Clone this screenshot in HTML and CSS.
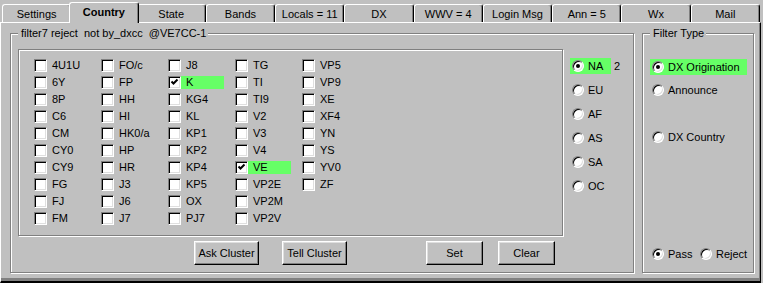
FILE: index.html
```html
<!DOCTYPE html>
<html lang="en">
<head>
  <meta charset="UTF-8">
  <title>Country Filter</title>
  <link rel="stylesheet" href="styles.css">
</head>
<body>

  <div id="onglets">
    <div class="onglet">Settings</div>
    <div class="onglet actif">Country</div>
    <div class="onglet">State</div>
    <div class="onglet">Bands</div>
    <div class="onglet">Locals = 11</div>
    <div class="onglet">DX</div>
    <div class="onglet">WWV = 4</div>
    <div class="onglet">Login Msg</div>
    <div class="onglet">Ann = 5</div>
    <div class="onglet">Wx</div>
    <div class="onglet">Mail</div>
  </div>

  <div id="panneau">
    <div class="groupe" id="groupeFiltre">
      <div class="legende">filter7 reject  not by_dxcc  @VE7CC-1</div>
      <div id="corpsFiltre">
        <div id="listePays"></div>
        <div id="continents">
          <div class="choix vert"><span class="radio coche"></span>NA</div><span id="compteNA">2</span>
          <div class="choix"><span class="radio"></span>EU</div>
          <div class="choix"><span class="radio"></span>AF</div>
          <div class="choix"><span class="radio"></span>AS</div>
          <div class="choix"><span class="radio"></span>SA</div>
          <div class="choix"><span class="radio"></span>OC</div>
        </div>
      </div>
      <div id="boutons">
        <button class="bouton large" id="boutonAsk">Ask Cluster</button>
        <button class="bouton large" id="boutonTell">Tell Cluster</button>
        <button class="bouton" id="boutonSet">Set</button>
        <button class="bouton" id="boutonClear">Clear</button>
      </div>
    </div>

    <div class="groupe" id="groupeType">
      <div class="legende">Filter Type</div>
      <div id="types">
        <div class="choix vert large"><span class="radio coche"></span>DX Origination</div>
        <div class="choix"><span class="radio"></span>Announce</div>
        <div class="choix" id="choixCountry"><span class="radio"></span>DX Country</div>
      </div>
      <div id="passReject">
        <div class="choix"><span class="radio coche"></span>Pass</div>
        <div class="choix"><span class="radio"></span>Reject</div>
      </div>
    </div>
  </div>

  <script>
    const pays = [
      '4U1U','6Y','8P','C6','CM','CY0','CY9','FG','FJ','FM',
      'FO/c','FP','HH','HI','HK0/a','HP','HR','J3','J6','J7',
      'J8','K','KG4','KL','KP1','KP2','KP4','KP5','OX','PJ7',
      'TG','TI','TI9','V2','V3','V4','VE','VP2E','VP2M','VP2V',
      'VP5','VP9','XE','XF4','YN','YS','YV0','ZF'
    ];
    const selection = ['K', 'VE'];
    const coche = '<svg width="9" height="9" viewBox="0 0 9 9"><path d="M1.5 3.5 L3.5 5.5 L7.5 1.5" stroke="#000" stroke-width="2" fill="none"/></svg>';

    const liste = document.getElementById('listePays');
    pays.forEach(function (nom) {
      const actif = selection.includes(nom);
      const item = document.createElement('div');
      item.className = 'pays';
      item.innerHTML = '<span class="case">' + (actif ? coche : '') + '</span>' +
        '<span class="nomPays' + (actif ? ' vert' : '') + '">' + nom + '</span>';
      liste.appendChild(item);
    });
  </script>

</body>
</html>
```

FILE: styles.css
```css
body {
  margin: 0;
  background-color: #c0c0c0;
  font-family: "Liberation Sans", Arial, sans-serif;
  font-size: 11px;
  color: #000000;
  width: 763px;
  height: 283px;
  overflow: hidden;
}

#onglets {
  display: flex;
  align-items: flex-end;
  height: 22px;
  padding-left: 2px;
  padding-right: 3px;
}

.onglet {
  flex: 1;
  height: 17px;
  line-height: 18px;
  text-align: center;
  border-top: 1px solid #ffffff;
  border-left: 1px solid #ffffff;
  border-right: 1px solid #000000;
  border-radius: 3px 3px 0 0;
  box-shadow: inset -1px 0 0 #808080;
}

.onglet.actif {
  height: 20px;
  line-height: 18px;
  margin: 0 -2px -1px;
  font-weight: bold;
  background-color: #c0c0c0;
  position: relative;
  z-index: 1;
}

#panneau {
  display: flex;
  gap: 8px;
  height: 261px;
  box-sizing: border-box;
  padding: 10px 0 0 9px;
  border-top: 1px solid #ffffff;
  border-left: 1px solid #ffffff;
  border-right: 1px solid #000000;
  border-bottom: 2px solid #000000;
  box-shadow: inset -1px -3px 0 #808080;
  margin-right: 2px;
}

.groupe {
  border: 1px solid #808080;
  box-shadow: inset 1px 1px 0 #ffffff, 1px 1px 0 #ffffff;
  height: 240px;
  box-sizing: border-box;
}

#groupeFiltre {
  width: 624px;
  padding-left: 7px;
}

#groupeType {
  width: 112px;
  padding-left: 7px;
  display: flex;
  flex-direction: column;
}

.legende {
  width: fit-content;
  margin: -7px 0 0 0;
  padding: 0 2px 0 3px;
  line-height: 13px;
  background-color: #c0c0c0;
  white-space: pre;
}

#corpsFiltre {
  display: flex;
  margin-top: 9px;
}

#listePays {
  width: 545px;
  height: 187px;
  box-sizing: border-box;
  border: 1px solid #808080;
  box-shadow: inset 1px 1px 0 #ffffff, 1px 1px 0 #ffffff;
  padding: 9px 0 0 15px;
  display: grid;
  grid-auto-flow: column;
  grid-template-rows: repeat(10, 17px);
  grid-auto-columns: 67px;
}

.pays {
  display: flex;
  align-items: flex-start;
}

.case {
  flex-shrink: 0;
  width: 13px;
  height: 13px;
  box-sizing: border-box;
  background-color: #ffffff;
  border: 1px solid;
  border-color: #808080 #ffffff #ffffff #808080;
  box-shadow: inset 1px 1px 0 #000000, inset -1px -1px 0 #dfdfdf;
  padding: 1px;
}

.case svg {
  display: block;
}

.nomPays {
  width: 43px;
  height: 13px;
  line-height: 13px;
  padding-left: 5px;
  box-sizing: border-box;
}

.vert {
  background-color: #66ff66;
}

#continents {
  position: relative;
  padding: 9px 0 0 7px;
  display: flex;
  flex-direction: column;
  gap: 8px;
}

#compteNA {
  position: absolute;
  left: 51px;
  top: 9px;
  line-height: 16px;
}

.choix {
  display: flex;
  align-items: center;
  height: 16px;
  width: 41px;
  padding-left: 2px;
  box-sizing: border-box;
  gap: 4px;
  white-space: nowrap;
}

.choix.large {
  width: 97px;
}

.radio {
  flex-shrink: 0;
  width: 12px;
  height: 12px;
  box-sizing: border-box;
  border-radius: 50%;
  background-color: #ffffff;
  border: 1px solid;
  border-color: #808080 #ffffff #ffffff #808080;
  box-shadow: inset 1px 1px 0 #000000, inset -1px -1px 0 #dfdfdf;
  display: flex;
  align-items: center;
  justify-content: center;
}

.radio.coche::after {
  content: "";
  width: 4px;
  height: 4px;
  border-radius: 50%;
  background-color: #000000;
}

#boutons {
  display: flex;
  margin-top: 5px;
  padding-left: 176px;
}

.bouton {
  width: 57px;
  height: 24px;
  font-family: inherit;
  font-size: 11px;
  color: #000000;
  background-color: #c0c0c0;
  border: 1px solid;
  border-color: #ffffff #000000 #000000 #ffffff;
  box-shadow: inset -1px -1px 0 #808080, inset 1px 1px 0 #dfdfdf;
  padding: 0;
}

.bouton.large {
  width: 65px;
}

#boutonTell {
  margin-left: 23px;
}

#boutonSet {
  margin-left: 79px;
}

#boutonClear {
  margin-left: 15px;
}

#types {
  display: flex;
  flex-direction: column;
  gap: 7px;
  margin-top: 19px;
}

#choixCountry {
  margin-top: 24px;
  width: 90px;
}

#passReject {
  display: flex;
  margin-top: auto;
  margin-bottom: 10px;
}

#passReject .choix {
  width: 48px;
}
```
